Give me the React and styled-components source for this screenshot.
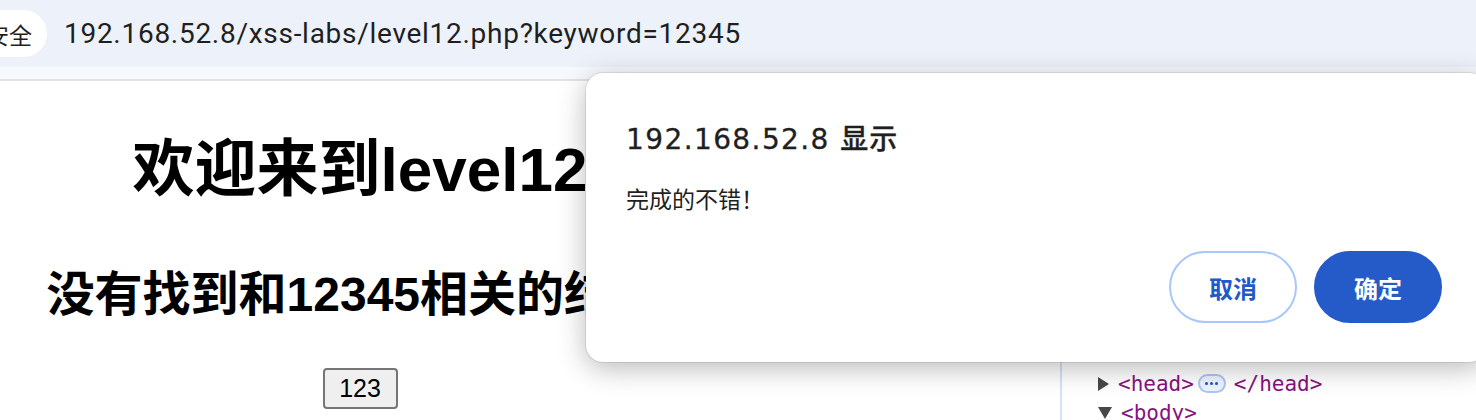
import React from "react";
import styled, { createGlobalStyle } from "styled-components";

const GlobalStyle = createGlobalStyle`
  html, body {
    margin: 0;
    padding: 0;
    background: #fff;
  }
  * {
    box-sizing: border-box;
  }
`;

const uiFont = `"Roboto", "Noto Sans CJK SC", "Noto Sans", sans-serif`;
const wideFont = `"DejaVu Sans", "Noto Sans CJK SC", sans-serif`;
const pageFont = `"Liberation Sans", "Noto Sans CJK SC", Arial, sans-serif`;

export default function App() {
  return (
    <>
      <GlobalStyle />
      <Window>
        <TopBar>
          <SecurityChip>不安全</SecurityChip>
          <UrlText>192.168.52.8/xss-labs/level12.php?keyword=12345</UrlText>
        </TopBar>
        <ToolbarStrip />
        <Main>
          <Page>
            <PageContent>
              <Heading1>欢迎来到level12</Heading1>
              <Heading2>没有找到和12345相关的结果.</Heading2>
              <PageButton>123</PageButton>
            </PageContent>
          </Page>
          <Devtools>
            <DomRow $indent={36}>
              <Caret $open={false} />
              <Tag>&lt;head&gt;</Tag>
              <Ellipsis>
                <Dot />
                <Dot />
                <Dot />
              </Ellipsis>
              <Tag>&lt;/head&gt;</Tag>
            </DomRow>
            <DomRow $indent={36}>
              <Caret $open />
              <Tag>&lt;body&gt;</Tag>
            </DomRow>
          </Devtools>
        </Main>

        <Dialog>
          <DialogTitle>
            192.168.52.8 <TitleCjk>显示</TitleCjk>
          </DialogTitle>
          <DialogMessage>完成的不错！</DialogMessage>
          <DialogActions>
            <DialogButton>取消</DialogButton>
            <DialogButton $primary>确定</DialogButton>
          </DialogActions>
        </Dialog>
      </Window>
    </>
  );
}

const Window = styled.div`
  position: relative;
  width: 1476px;
  height: 420px;
  overflow: hidden;
  display: flex;
  flex-direction: column;
  background: #fff;
`;

const TopBar = styled.div`
  height: 67px;
  flex: none;
  background: #edf2fa;
  display: flex;
  align-items: center;
`;

const SecurityChip = styled.div`
  margin-left: -52px;
  height: 47px;
  padding: 0 15px 0 15px;
  border-radius: 24px;
  background: #fff;
  display: flex;
  align-items: center;
  font-family: ${uiFont};
  font-size: 23px;
  color: #1f1f1f;
`;

const UrlText = styled.div`
  margin-left: 17px;
  font-family: ${uiFont};
  font-size: 28px;
  color: #1f1f1f;
  letter-spacing: 0.72px;
`;

const ToolbarStrip = styled.div`
  height: 14px;
  flex: none;
  background: #f7f9fc;
  border-bottom: 2px solid #e3e3e3;
`;

const Main = styled.div`
  flex: 1;
  display: flex;
  min-height: 0;
`;

const Page = styled.div`
  width: 1060px;
  flex: none;
  background: #fff;
`;

const PageContent = styled.div`
  width: 720px;
  display: flex;
  flex-direction: column;
  align-items: center;
  font-family: ${pageFont};
  color: #000;
`;

const Heading1 = styled.h1`
  margin: 53px 0 0;
  font-size: 62px;
  font-weight: 700;
  line-height: 72px;
  white-space: nowrap;
`;

const Heading2 = styled.h2`
  margin: 62px 0 0;
  font-size: 48px;
  font-weight: 700;
  line-height: 54px;
  white-space: nowrap;
`;

const PageButton = styled.button`
  margin-top: 46px;
  width: 75px;
  height: 41px;
  padding: 0;
  font-family: ${pageFont};
  font-size: 25px;
  color: #000;
  background: #efefef;
  border: 2px solid #767676;
  border-radius: 4px;
`;

const Devtools = styled.div`
  flex: 1;
  border-left: 2px solid #d3e3fd;
  background: #fff;
  padding-top: 288px;
  display: flex;
  flex-direction: column;
`;

const DomRow = styled.div`
  height: 29px;
  flex: none;
  display: flex;
  align-items: center;
  gap: 4px;
  padding-left: ${(p) => p.$indent}px;
  font-family: "DejaVu Sans Mono", "Liberation Mono", monospace;
  font-size: 21px;
`;

const Caret = styled.span`
  width: 0;
  height: 0;
  margin-right: 5px;
  ${(p) =>
    p.$open
      ? `
    border-left: 7px solid transparent;
    border-right: 7px solid transparent;
    border-top: 12px solid #474747;
  `
      : `
    border-top: 7px solid transparent;
    border-bottom: 7px solid transparent;
    border-left: 11px solid #474747;
  `}
`;

const Tag = styled.span`
  color: #881280;
`;

const Ellipsis = styled.span`
  width: 28px;
  height: 19px;
  margin: 0 4px 0 0;
  border: 2px solid #a8c7fa;
  border-radius: 10px;
  background: #eef3fd;
  display: flex;
  align-items: center;
  justify-content: center;
  gap: 2px;
`;

const Dot = styled.span`
  width: 3px;
  height: 3px;
  border-radius: 50%;
  background: #0b57d0;
`;

const Dialog = styled.div`
  position: absolute;
  left: 586px;
  top: 73px;
  width: 900px;
  height: 289px;
  background: #fff;
  border-radius: 17px;
  box-shadow: 0 0 0 1px rgba(0, 0, 0, 0.08), 0 6px 28px rgba(0, 0, 0, 0.28);
  padding: 46px 34px 0 40px;
  display: flex;
  flex-direction: column;
  font-family: ${uiFont};
`;

const DialogTitle = styled.div`
  font-family: ${wideFont};
  font-size: 28px;
  line-height: 36px;
  letter-spacing: 1.4px;
  color: #1f1f1f;
  white-space: nowrap;
  -webkit-text-stroke: 0.3px #1f1f1f;
`;

const TitleCjk = styled.span`
  font-family: "Noto Sans CJK SC", sans-serif;
  font-weight: 500;
  letter-spacing: 1px;
`;

const DialogMessage = styled.div`
  margin-top: 29px;
  font-size: 23px;
  line-height: 28px;
  color: #1f1f1f;
`;

const DialogActions = styled.div`
  margin-top: 36px;
  margin-right: 10px;
  display: flex;
  justify-content: flex-end;
  gap: 17px;
`;

const DialogButton = styled.button`
  width: 128px;
  height: 72px;
  border-radius: 36px;
  font-family: ${uiFont};
  font-size: 24px;
  font-weight: 700;
  cursor: pointer;
  background: ${(p) => (p.$primary ? "#255bc9" : "#fff")};
  color: ${(p) => (p.$primary ? "#fff" : "#2358c8")};
  border: 2px solid ${(p) => (p.$primary ? "#255bc9" : "#a8c7fa")};
`;
